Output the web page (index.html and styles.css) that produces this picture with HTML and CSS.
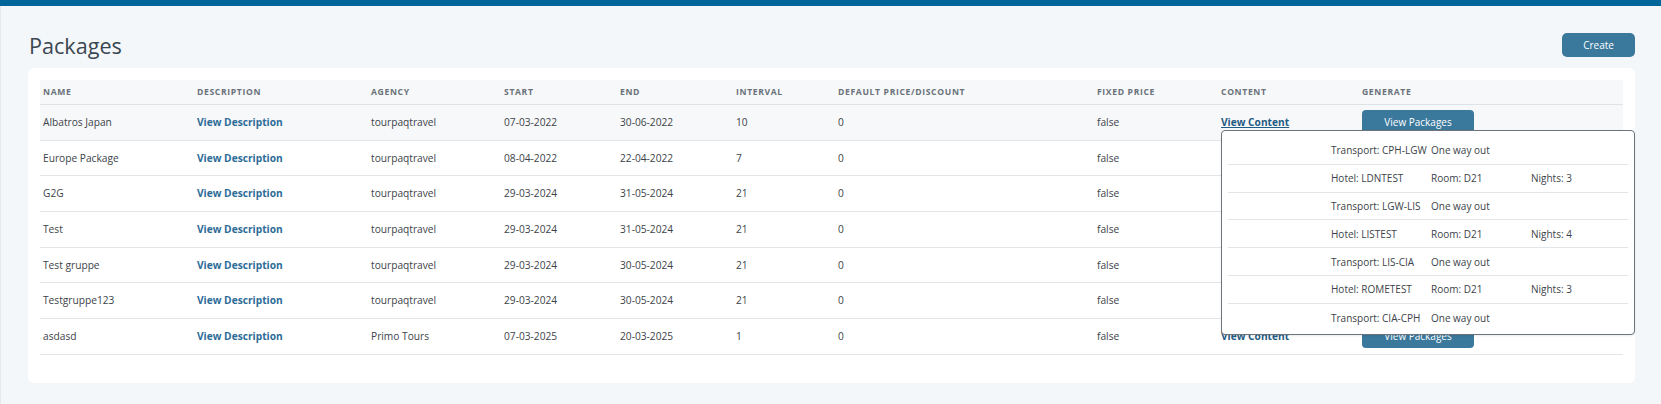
FILE: index.html
```html
<!DOCTYPE html>
<html lang="en">
<head>
<meta charset="utf-8">
<title>Packages</title>
<link rel="stylesheet" href="styles.css">
</head>
<body>
<div class="topbar"></div>
<main class="page">
  <div class="page-head">
    <h1 class="page-title">Packages</h1>
    <button class="btn btn-create" type="button">Create</button>
  </div>
  <section class="card">
    <table class="packages">
      <colgroup>
        <col class="c-name"><col class="c-desc"><col class="c-agency"><col class="c-start"><col class="c-end"><col class="c-interval"><col class="c-default"><col class="c-fixed"><col class="c-content"><col class="c-generate">
      </colgroup>
      <thead>
        <tr>
          <th>Name</th><th>Description</th><th>Agency</th><th>Start</th><th>End</th><th>Interval</th><th>Default Price/Discount</th><th>Fixed Price</th><th>Content</th><th>Generate</th>
        </tr>
      </thead>
      <tbody>
        <tr class="is-hover">
          <td>Albatros Japan</td><td><a class="link" href="#">View Description</a></td><td>tourpaqtravel</td><td>07-03-2022</td><td>30-06-2022</td><td>10</td><td>0</td><td>false</td>
          <td class="content-cell"><a class="link link-content is-active" href="#">View Content</a>
            <div class="popup">
              <table class="popup-table">
                <tr><td></td><td>Transport: CPH-LGW</td><td>One way out</td><td></td></tr>
                <tr><td></td><td>Hotel: LDNTEST</td><td>Room: D21</td><td>Nights: 3</td></tr>
                <tr><td></td><td>Transport: LGW-LIS</td><td>One way out</td><td></td></tr>
                <tr><td></td><td>Hotel: LISTEST</td><td>Room: D21</td><td>Nights: 4</td></tr>
                <tr><td></td><td>Transport: LIS-CIA</td><td>One way out</td><td></td></tr>
                <tr><td></td><td>Hotel: ROMETEST</td><td>Room: D21</td><td>Nights: 3</td></tr>
                <tr><td></td><td>Transport: CIA-CPH</td><td>One way out</td><td></td></tr>
              </table>
            </div>
          </td>
          <td><button class="btn btn-gen" type="button">View Packages</button></td>
        </tr>
        <tr>
          <td>Europe Package</td><td><a class="link" href="#">View Description</a></td><td>tourpaqtravel</td><td>08-04-2022</td><td>22-04-2022</td><td>7</td><td>0</td><td>false</td>
          <td class="under-popup"></td><td class="under-popup"></td>
        </tr>
        <tr>
          <td>G2G</td><td><a class="link" href="#">View Description</a></td><td>tourpaqtravel</td><td>29-03-2024</td><td>31-05-2024</td><td>21</td><td>0</td><td>false</td>
          <td class="under-popup"></td><td class="under-popup"></td>
        </tr>
        <tr>
          <td>Test</td><td><a class="link" href="#">View Description</a></td><td>tourpaqtravel</td><td>29-03-2024</td><td>31-05-2024</td><td>21</td><td>0</td><td>false</td>
          <td class="under-popup"></td><td class="under-popup"></td>
        </tr>
        <tr>
          <td>Test gruppe</td><td><a class="link" href="#">View Description</a></td><td>tourpaqtravel</td><td>29-03-2024</td><td>30-05-2024</td><td>21</td><td>0</td><td>false</td>
          <td class="under-popup"></td><td class="under-popup"></td>
        </tr>
        <tr>
          <td>Testgruppe123</td><td><a class="link" href="#">View Description</a></td><td>tourpaqtravel</td><td>29-03-2024</td><td>30-05-2024</td><td>21</td><td>0</td><td>false</td>
          <td class="under-popup"></td><td class="under-popup"></td>
        </tr>
        <tr>
          <td>asdasd</td><td><a class="link" href="#">View Description</a></td><td>Primo Tours</td><td>07-03-2025</td><td>20-03-2025</td><td>1</td><td>0</td><td>false</td>
          <td><a class="link link-content" href="#">View Content</a></td><td><button class="btn btn-gen" type="button">View Packages</button></td>
        </tr>
      </tbody>
    </table>
  </section>
</main>
</body>
</html>
```
FILE: styles.css
```css
* { box-sizing: border-box; }

html, body {
  margin: 0;
  padding: 0;
  background: #f4f7fa;
  font-family: "Open Sans", "Noto Sans", sans-serif;
  color: #3c4349;
}

.topbar {
  height: 6px;
  background: #00659b;
}

.page {
  padding: 27px 26px 21px 27px;
  border-left: 1px solid #e6eaee;
  min-height: 398px;
}

.page-head {
  display: flex;
  align-items: center;
  justify-content: space-between;
  height: 24px;
  margin-bottom: 11px;
}

.page-title {
  margin: 1px 0 0 1px;
  font-size: 21.6px;
  font-weight: 400;
  line-height: 24px;
  color: #3b4650;
}

.btn {
  border: 0;
  border-radius: 4px;
  background: #3a789c;
  color: #ffffff;
  font-family: "Open Sans", "Noto Sans", sans-serif;
  font-size: 10px;
  padding: 0;
  height: 24px;
  cursor: pointer;
}

.btn-create {
  width: 73px;
  border-radius: 5px;
}

.card {
  background: #ffffff;
  border-radius: 6px;
  padding: 12px 12px 28px;
}

.packages {
  width: 100%;
  table-layout: fixed;
  border-collapse: separate;
  border-spacing: 0;
}

.c-name { width: 154px; }
.c-desc { width: 174px; }
.c-agency { width: 133px; }
.c-start { width: 116px; }
.c-end { width: 116px; }
.c-interval { width: 102px; }
.c-default { width: 259px; }
.c-fixed { width: 124px; }
.c-content { width: 141px; }
.c-generate { width: 264px; }

.packages th {
  background: #f7f8f9;
  height: 25px;
  padding: 0 3px;
  border-bottom: 1px solid #dfe3e7;
  text-align: left;
  vertical-align: middle;
  font-size: 8.6px;
  font-weight: 700;
  letter-spacing: 0.65px;
  text-transform: uppercase;
  color: #6a727b;
  white-space: nowrap;
}

.packages > tbody > tr > td {
  height: 35.7px;
  padding: 0 3px;
  border-bottom: 1px solid #e3e6e9;
  vertical-align: middle;
  font-size: 10.2px;
  line-height: 18.67px;
  white-space: nowrap;
}

.packages > tbody > tr.is-hover > td {
  background: #f7f8f9;
}

.link {
  color: #2d6c97;
  font-weight: 700;
  text-decoration: none;
}

.link-content {
  color: #1f5b84;
}

.link-content.is-active {
  text-decoration: underline;
}

.btn-gen {
  width: 112px;
  display: inline-block;
  vertical-align: middle;
}

.content-cell {
  position: relative;
}

.popup {
  position: absolute;
  top: 25px;
  left: 3px;
  width: 414px;
  z-index: 5;
  background: #ffffff;
  border: 1px solid #6c737b;
  border-radius: 4px;
  padding: 6px 6px 2px;
  box-shadow: 0 1px 2px rgba(0, 0, 0, 0.08);
}

.popup-table {
  width: 100%;
  table-layout: fixed;
  border-collapse: separate;
  border-spacing: 0;
}

.popup-table td {
  width: 25%;
  height: 27.8px;
  padding: 0 3px;
  border-bottom: 1px solid #e3e6e9;
  font-size: 10px;
  line-height: 16px;
  color: #3c4349;
  white-space: nowrap;
  vertical-align: middle;
}

.popup-table tr:last-child td {
  border-bottom: 0;
}
```
